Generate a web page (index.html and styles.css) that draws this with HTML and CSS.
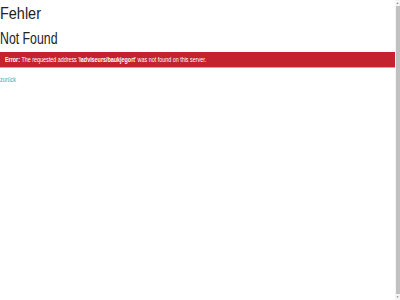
FILE: index.html
```html
<html>
<head><meta http-equiv="Content-Type" content="text/html; charset=utf-8">
<link rel="stylesheet" href="styles.css">
</head>
<body>
<div class="page">
  <div class="content">
    <h1><span class="narrow wide">Fehler</span></h1>
    <h2><span class="narrow">Not Found</span></h2>
    <div class="alert"><span class="narrow"><b>Error:</b> The requested address '<b>ladviseurs/baukjegort</b>' was not found on this server.</span></div>
    <a href="#" class="back"><span class="narrow">zurück</span></a>
  </div>
  <div class="scroll">
    <div class="arrow">&#9650;</div>
    <div class="thumb"></div>
    <div class="arrow">&#9660;</div>
  </div>
</div>
</body>
</html>
```

FILE: styles.css
```css
html, body {
	margin: 0;
	padding: 0;
	height: 100%;
	background: #ffffff;
	font-family: "Liberation Sans", Arial, sans-serif;
	color: #222222;
}
.page {
	display: flex;
	height: 300px;
}
.content {
	flex: 1;
}
.narrow {
	display: inline-block;
	white-space: nowrap;
	transform: scaleX(0.77);
	transform-origin: left center;
}
.narrow.wide {
	transform: scaleX(0.85);
}
h1 {
	font-size: 17px;
	font-weight: normal;
	margin: 4px 0 0 0;
	line-height: 20px;
}
h2 {
	font-size: 16px;
	font-weight: normal;
	margin: 6px 0 0 0;
	line-height: 18px;
}
.alert {
	background: #c4222f;
	color: #ffffff;
	font-size: 7px;
	height: 15px;
	line-height: 15px;
	padding: 0 5px;
	margin-top: 4px;
	border-bottom: 1px solid #e59aa0;
}
.back {
	display: block;
	margin-top: 7px;
	font-size: 7px;
	line-height: 9px;
	color: #33aaaa;
	text-decoration: none;
}
.scroll {
	width: 5px;
	display: flex;
	flex-direction: column;
	background: #f4f4f4;
}
.arrow {
	font-size: 3px;
	height: 6px;
	line-height: 6px;
	text-align: center;
	color: #777777;
}
.thumb {
	flex: 1;
	background: #c1c1c1;
	margin: 0 0.5px;
}
```
